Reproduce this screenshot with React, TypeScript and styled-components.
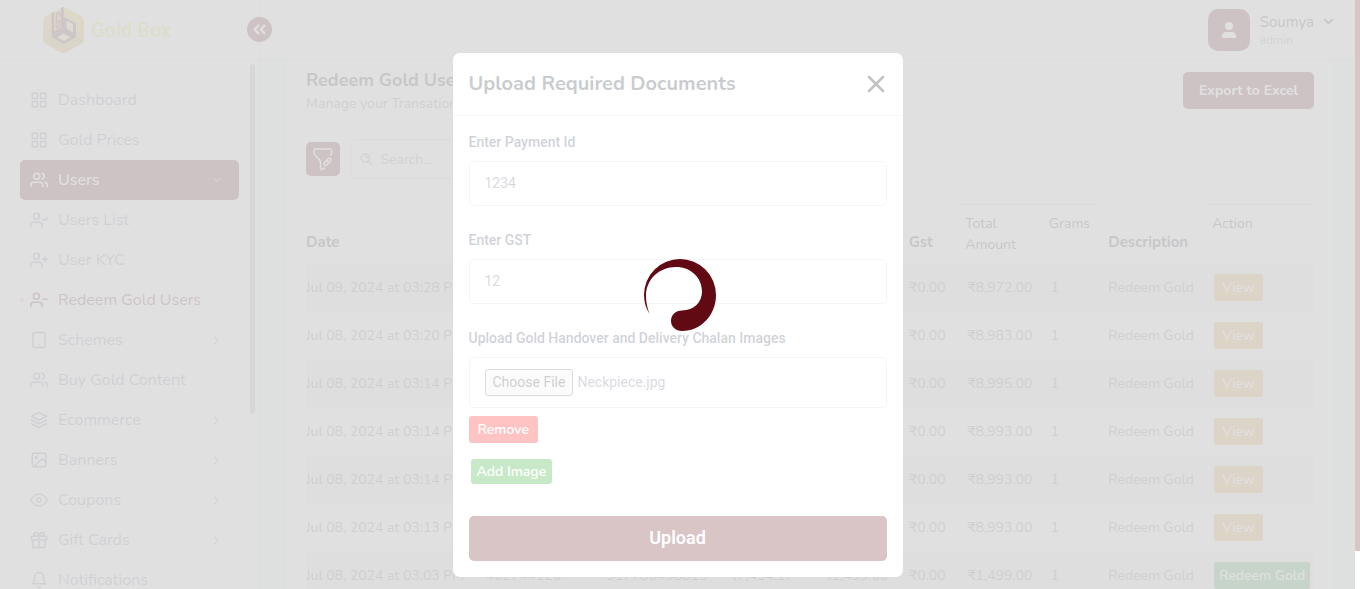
import React from "react";
import styled, { createGlobalStyle, css } from "styled-components";
import {
  FiBell, FiChevronDown, FiChevronRight, FiEye, FiGift, FiGrid, FiImage,
  FiLayers, FiTablet, FiUserCheck, FiUserMinus, FiUserPlus, FiUsers,
} from "react-icons/fi";
import type { IconType } from "react-icons";

const maroon = "#600914";
const nunito = `Nunito, Lato, "Open Sans", sans-serif`;
const roboto = `Roboto, "Liberation Sans", sans-serif`;

const GlobalStyle = createGlobalStyle`
  *, *::before, *::after { box-sizing: border-box; }
  body { margin: 0; background: #fff; font-family: ${nunito}; font-size: 14px; color: #212b36; }
  button, input { font-family: inherit; }
  h1, h2, p, ul { margin: 0; padding: 0; }
`;

const Shell = styled.div`
  height: 100vh;
  display: flex;
  flex-direction: column;
  overflow: hidden;
  padding-right: 5px;
`;

const TopBar = styled.header`
  display: flex;
  flex: none;
  height: 60px;
  border-bottom: 1px solid #d5dcdf;
`;

const BrandArea = styled.div`
  position: relative;
  display: flex;
  align-items: center;
  gap: 6px;
  width: 260px;
  padding-left: 42px;
  border-right: 1px solid #d5dcdf;
`;

const BrandName = styled.span`
  font: 500 20px/24px ${roboto};
  color: #e6e05a;
`;

const CollapseButton = styled.button`
  position: absolute;
  right: -13px;
  top: 17px;
  width: 25px;
  height: 25px;
  padding: 0;
  border: 0;
  border-radius: 50%;
  display: grid;
  place-items: center;
  background: ${maroon};
`;

const Account = styled.div`
  margin-left: auto;
  padding-right: 19px;
  display: flex;
  align-items: center;
  gap: 10px;
`;

const Avatar = styled.span`
  width: 42px;
  height: 42px;
  border-radius: 10px;
  display: grid;
  place-items: center;
  background: ${maroon};
`;

const AccountText = styled.div`
  display: grid;
  grid-template-columns: auto auto;
  column-gap: 7px;
  align-items: center;
  font-size: 15px;
  line-height: 20px;
  svg { color: #212b36; }
`;

const Role = styled.span`
  font-size: 12px;
  line-height: 16px;
  color: #7b8e9c;
`;

const Body = styled.div`
  display: flex;
  flex: 1;
  min-height: 0;
`;

const Sidebar = styled.nav`
  display: flex;
  flex: none;
  width: 260px;
  padding: 4px 4px 0 20px;
  border-right: 1px solid #d5dcdf;
  overflow: hidden;
`;

const Menu = styled.ul`
  flex: 1;
  padding-top: 16px;
  list-style: none;
`;

const SideScroll = styled.div`
  width: 5px;
  height: 350px;
  margin-left: 11px;
  border-radius: 3px;
  background: #b4b4b4;
`;

const MenuLink = styled.a<{ $state?: "open" | "current" }>`
  position: relative;
  display: flex;
  align-items: center;
  gap: 10px;
  height: 40px;
  padding: 0 16px 0 10px;
  border-radius: 5px;
  font-size: 16px;
  color: #737b95;
  text-decoration: none;
  ${(p) => p.$state === "open" && css`background: ${maroon}; color: #fff; font-weight: 500;`}
  ${(p) => p.$state === "current" && css`
    color: ${maroon};
    &::before {
      content: "";
      position: absolute;
      left: 0;
      width: 4px;
      height: 4px;
      border-radius: 50%;
      background: #ffb580;
    }
  `}
`;

const Arrow = styled.span`
  margin-left: auto;
  display: flex;
  opacity: 0.8;
`;

const Main = styled.main`
  flex: 1;
  min-width: 0;
  padding: 0 21px 0 25px;
  background: #ebf7f3;
`;

const Card = styled.section`
  height: 100%;
  padding: 6px 19px 0 20px;
  background: #fff;
  overflow: hidden;
  border: solid #e4eeee;
  border-width: 0 1px;
`;

const CardHead = styled.div`
  display: flex;
  justify-content: space-between;
  align-items: center;
  height: 49px;
`;

const PageTitle = styled.h1`
  font-size: 18px;
  line-height: 26px;
  font-weight: 700;
`;

const Subtitle = styled.p`
  font-size: 14px;
  line-height: 22px;
  color: #637381;
`;

const ExportButton = styled.button`
  height: 37px;
  padding: 0 16px;
  border: 0;
  border-radius: 5px;
  background: ${maroon};
  color: #fff;
  font-size: 14px;
  font-weight: 700;
`;

const Tools = styled.div`
  display: flex;
  align-items: center;
  gap: 10px;
  margin: 24px 0 25px;
`;

const FilterButton = styled.button`
  width: 34px;
  height: 34px;
  padding: 0;
  border: 0;
  border-radius: 5px;
  display: grid;
  place-items: center;
  background: ${maroon};
`;

const SearchBox = styled.label`
  display: flex;
  align-items: center;
  gap: 8px;
  width: 200px;
  height: 40px;
  padding: 0 9px;
  border: 1px solid #d0d4da;
  border-radius: 5px;
`;

const SearchInput = styled.input`
  width: 100%;
  padding: 0;
  border: 0;
  outline: 0;
  background: none;
  font-size: 14px;
  &::placeholder { color: #7e7e7e; }
`;

const Table = styled.table`
  width: 100%;
  table-layout: fixed;
  border-collapse: separate;
  border-spacing: 0;
`;

const Th = styled.th<{ $light?: boolean; $inset?: boolean }>`
  height: 59px;
  padding: 0 0 10px ${(p) => (p.$inset ? 10 : 0)}px;
  text-align: left;
  vertical-align: bottom;
  font-size: 15px;
  line-height: 21px;
  font-weight: 700;
  white-space: nowrap;
  ${(p) => p.$light && css`
    padding: 8px 0 8px 8px;
    border-top: 1px solid #ccd0d3;
    vertical-align: top;
    font-size: 14px;
    font-weight: 400;
    white-space: normal;
  `}
`;

const Row = styled.tr`
  &:nth-child(odd) { background: #eaeaea; }
`;

const Td = styled.td<{ $inset?: boolean }>`
  height: 48px;
  padding: 0 0 0 ${(p) => (p.$inset ? 10 : 0)}px;
  font-size: 14px;
  color: #637381;
  white-space: nowrap;
`;

const RowButton = styled.button<{ $wide?: boolean }>`
  display: block;
  height: 27px;
  padding: 0 ${(p) => (p.$wide ? 5 : 8)}px;
  border: 0;
  border-radius: 3px;
  background: ${(p) => (p.$wide ? "#28963c" : "#d0982a")};
  color: #fff;
  font-size: 14px;
  font-weight: 500;
`;

const Backdrop = styled.div`
  position: fixed;
  inset: 0 5px 0 0;
  display: flex;
  justify-content: center;
  align-items: flex-start;
  padding-top: 53px;
  background: rgba(0, 0, 0, 0.5);
`;

const Dialog = styled.section`
  width: 450px;
  border-radius: 7px;
  background: #fff;
`;

const DialogHead = styled.header`
  display: flex;
  justify-content: space-between;
  align-items: center;
  height: 63px;
  padding: 0 16px;
  border-bottom: 1px solid #dcdfe4;
`;

const DialogTitle = styled.h2`
  font-size: 20px;
  line-height: 26px;
  font-weight: 700;
`;

const CloseButton = styled.button`
  display: flex;
  padding: 2px;
  border: 0;
  background: none;
`;

const Form = styled.form`
  display: flex;
  flex-direction: column;
  align-items: flex-start;
  padding: 16px;
  font-family: ${roboto};
`;

const Field = styled.div`
  width: 100%;
  margin-bottom: 24px;
`;

const Label = styled.label`
  display: block;
  margin-bottom: 8px;
  font-size: 14px;
  line-height: 21px;
  font-weight: 500;
  color: #3a4560;
`;

const TextInput = styled.input`
  display: block;
  width: 100%;
  height: 45px;
  padding: 0 15px 1px;
  border: 1px solid #d4d5dc;
  border-radius: 5px;
  font-size: 14px;
  color: #5b6678;
`;

const FileField = styled(Field)`
  margin-bottom: 8px;
`;

const FileBox = styled.label`
  display: flex;
  align-items: center;
  gap: 4px;
  height: 51px;
  padding: 0 15px;
  border: 1px solid #d4d5dc;
  border-radius: 5px;
  font-size: 14px;
  line-height: 25px;
  color: #5b6678;
`;

const FileInput = styled.input`
  position: absolute;
  width: 1px;
  height: 1px;
  opacity: 0;
`;

const FileButton = styled.span`
  padding: 0 7px;
  border: 1px solid #6b6b6b;
  border-radius: 3px;
  background: #efefef;
  color: #333;
`;

const SmallButton = styled.button<{ $kind: "remove" | "add" }>`
  border: 0;
  border-radius: 3px;
  color: #fff;
  font: 600 14px/25px ${nunito};
  ${(p) => p.$kind === "remove"
    ? css`padding: 1px 9px; background: #ff0808;`
    : css`padding: 0 6px; margin: 16px 2px 32px; background: #15a31a;`}
`;

const UploadButton = styled.button`
  width: 100%;
  height: 45px;
  padding: 0 0 2px;
  border: 0;
  border-radius: 5px;
  background: ${maroon};
  color: #fff;
  font-size: 18px;
  font-weight: 600;
`;

const PageScroll = styled.div`
  position: fixed;
  inset: 0 0 0 auto;
  width: 5px;
  background: #fff;
  &::before {
    content: "";
    display: block;
    height: 93.5%;
    background: ${maroon};
  }
`;

const LoadingVeil = styled.div`
  position: fixed;
  inset: 0;
  display: grid;
  place-items: center;
  background: rgba(255, 255, 255, 0.76);
`;

type Item = { icon: IconType; text: string; arrow?: "down" | "right"; state?: "open" | "current" };

const menu: Item[] = [
  { icon: FiGrid, text: "Dashboard" },
  { icon: FiGrid, text: "Gold Prices" },
  { icon: FiUsers, text: "Users", arrow: "down", state: "open" },
  { icon: FiUserCheck, text: "Users List" },
  { icon: FiUserPlus, text: "User KYC" },
  { icon: FiUserMinus, text: "Redeem Gold Users", state: "current" },
  { icon: FiTablet, text: "Schemes", arrow: "right" },
  { icon: FiUsers, text: "Buy Gold Content" },
  { icon: FiLayers, text: "Ecommerce", arrow: "right" },
  { icon: FiImage, text: "Banners", arrow: "right" },
  { icon: FiEye, text: "Coupons", arrow: "right" },
  { icon: FiGift, text: "Gift Cards", arrow: "right" },
  { icon: FiBell, text: "Notifications" },
];

const rows = [
  { date: "Jul 09, 2024 at 03:28 PM", total: "₹8,972.00" },
  { date: "Jul 08, 2024 at 03:20 PM", total: "₹8,983.00" },
  { date: "Jul 08, 2024 at 03:14 PM", total: "₹8,995.00" },
  { date: "Jul 08, 2024 at 03:14 PM", total: "₹8,993.00" },
  { date: "Jul 08, 2024 at 03:14 PM", total: "₹8,993.00" },
  { date: "Jul 08, 2024 at 03:13 PM", total: "₹8,993.00" },
  { date: "Jul 08, 2024 at 03:03 PM", total: "₹1,499.00", redeem: true },
];

const Logo = () => (
  <svg width="43" height="48" viewBox="0 0 43 48" aria-hidden="true">
    <defs>
      <linearGradient id="gold" x1="0" y1="0" x2="0" y2="1">
        <stop offset="0" stopColor="#ecc440" />
        <stop offset="1" stopColor="#c8963c" />
      </linearGradient>
    </defs>
    <path d="M19 1.6q2.500-1.400 5 0L39 10q3 1.600 3 5v18q0 3.400-3 5L24 46.400q-2.500 1.400-5 0L4 38q-3-1.600-3-5V15q0-3.400 3-5z" fill="url(#gold)" />
    <path fill="#6a2035" fillRule="evenodd" d="M9.700 7l2.500-1v19.500l6.800-4V2l2.700-1v10L34 17v14l-12.300 7L9.700 31z" />
    <path fill="#f0d080" d="M24.500 14.700L31 18v8.500l-6.500-4zM15 31.300l6.700-3.700 6.600 3.700-6.600 3.700z" />
    <path fill="none" stroke="#6a2035" strokeWidth="1.600" d="M17.600 11V7.500q0-1.300-1.500-.700-1.600.700-1.600 2.500v11.500q0 1.700 1.500 1 1.600-.800 1.600-2.500V14.500l-1.600.700" />
  </svg>
);

const FilterIcon = () => (
  <svg width="22" height="24" viewBox="0 0 22 24" fill="none" stroke="#fff" strokeWidth="1.500" strokeLinecap="round" strokeLinejoin="round" aria-hidden="true">
    <path d="M19 8l.500-1.500V3.500Q19.500 2 18 2H3.500Q2 2 2 3.500V6q0 1 1 2l4.500 5q1 1 1 2.500V21q0 2 2 1.200l2-1.200" />
    <path d="M12.500 15.500l4-4q1.300-.800 2.200.200.900 1 0 2.200l-4 4.300q-1.200.800-2.200 0-.900-1.300 0-2.700zM15 15l1.200-1.200" />
  </svg>
);

const SearchIcon = () => (
  <svg width="14" height="14" viewBox="0 0 14 14" fill="none" stroke="#70757c" strokeWidth="1.300" strokeLinecap="round" aria-hidden="true">
    <circle cx="6" cy="6" r="4.700" />
    <path d="M9.500 9.500L13 13M6 3.700q1.800 0 2.300 1.800" />
  </svg>
);

const Swirl = () => (
  <svg width="72" height="72" viewBox="0 0 72 72" role="img" aria-label="Loading">
    <path
      fill="#620a14"
      d="M5.500 55C2 49 0 43 0 36A36 36 0 0 1 72 36C72 56 57 72 38 72C31.500 72 27 67.500 27 62C27 56 31.500 51.500 38 51.500C50 51.500 58 43 58 32.500C58 18.500 46.500 8 32 8C15 8 2 20.500 2 37C2 44 3.500 49.500 5.500 55Z"
    />
  </svg>
);

export default function App() {
  return (
    <>
      <GlobalStyle />
      <Shell>
        <TopBar>
          <BrandArea>
            <Logo />
            <BrandName>Gold Box</BrandName>
            <CollapseButton aria-label="Collapse sidebar">
              <svg width="13" height="11" viewBox="0 0 13 11" fill="none" stroke="#fff" strokeWidth="2.400" aria-hidden="true">
                <path d="M6 1L1.800 5.500 6 10M12 1L7.800 5.500 12 10" />
              </svg>
            </CollapseButton>
          </BrandArea>
          <Account>
            <Avatar>
              <svg width="14" height="16" viewBox="0 0 14 16" fill="#fff" aria-hidden="true">
                <circle cx="7" cy="4" r="4" />
                <path d="M0 16v-1q0-5 5-5h4q5 0 5 5v1z" />
              </svg>
            </Avatar>
            <AccountText>
              <span>Soumya</span>
              <FiChevronDown size={15} strokeWidth={3} />
              <Role>admin</Role>
            </AccountText>
          </Account>
        </TopBar>
        <Body>
          <Sidebar aria-label="Main menu">
            <Menu>
              {menu.map(({ icon: Icon, text, arrow, state }) => (
                <li key={text}>
                  <MenuLink href="#" $state={state}>
                    <Icon size={18} />
                    {text}
                    {arrow && (
                      <Arrow>
                        {arrow === "down" ? <FiChevronDown size={12} /> : <FiChevronRight size={13} />}
                      </Arrow>
                    )}
                  </MenuLink>
                </li>
              ))}
            </Menu>
            <SideScroll />
          </Sidebar>
          <Main>
            <Card>
              <CardHead>
                <div>
                  <PageTitle>Redeem Gold Users</PageTitle>
                  <Subtitle>Manage your Transations</Subtitle>
                </div>
                <ExportButton>Export to Excel</ExportButton>
              </CardHead>
              <Tools>
                <FilterButton aria-label="Filter"><FilterIcon /></FilterButton>
                <SearchBox>
                  <SearchIcon />
                  <SearchInput type="search" placeholder="Search..." aria-label="Search" />
                </SearchBox>
              </Tools>
              <Table>
                <colgroup>
                  <col />
                  <col style={{ width: "12%" }} />
                  <col style={{ width: "12.1%" }} />
                  <col style={{ width: "9.4%" }} />
                  <col style={{ width: "8.5%" }} />
                  <col style={{ width: "4.8%" }} />
                  <col style={{ width: "8.3%" }} />
                  <col style={{ width: "5.7%" }} />
                  <col style={{ width: "10.5%" }} />
                  <col style={{ width: "10.9%" }} />
                </colgroup>
                <thead>
                  <tr>
                    <Th>Date</Th>
                    <Th>Payment Id</Th>
                    <Th>Mobile</Th>
                    <Th>Price</Th>
                    <Th>Amount</Th>
                    <Th>Gst</Th>
                    <Th $light>Total Amount</Th>
                    <Th $light>Grams</Th>
                    <Th $inset>Description</Th>
                    <Th $light>Action</Th>
                  </tr>
                </thead>
                <tbody>
                  {rows.map((r, i) => (
                    <Row key={i}>
                      <Td>{r.date}</Td>
                      <Td>462744126</Td>
                      <Td>917780498015</Td>
                      <Td>₹7,454.17</Td>
                      <Td>₹1,499.00</Td>
                      <Td>₹0.00</Td>
                      <Td $inset>{r.total}</Td>
                      <Td $inset>1</Td>
                      <Td $inset>Redeem Gold</Td>
                      <Td $inset>
                        <RowButton $wide={r.redeem}>{r.redeem ? "Redeem Gold" : "View"}</RowButton>
                      </Td>
                    </Row>
                  ))}
                </tbody>
              </Table>
            </Card>
          </Main>
        </Body>
      </Shell>
      <Backdrop>
        <Dialog role="dialog" aria-labelledby="upload-title">
          <DialogHead>
            <DialogTitle id="upload-title">Upload Required Documents</DialogTitle>
            <CloseButton aria-label="Close">
              <svg width="18" height="18" viewBox="0 0 18 18" stroke="#000" strokeWidth="2.500" strokeLinecap="round" aria-hidden="true">
                <path d="M2 2l14 14M16 2L2 16" />
              </svg>
            </CloseButton>
          </DialogHead>
          <Form onSubmit={(e) => e.preventDefault()}>
            <Field>
              <Label htmlFor="payment">Enter Payment Id</Label>
              <TextInput id="payment" defaultValue="1234" />
            </Field>
            <Field>
              <Label htmlFor="gst">Enter GST</Label>
              <TextInput id="gst" defaultValue="12" />
            </Field>
            <FileField>
              <Label htmlFor="images">Upload Gold Handover and Delivery Chalan Images</Label>
              <FileBox>
                <FileInput id="images" type="file" />
                <FileButton>Choose File</FileButton>
                Neckpiece.jpg
              </FileBox>
            </FileField>
            <SmallButton type="button" $kind="remove">Remove</SmallButton>
            <SmallButton type="button" $kind="add">Add Image</SmallButton>
            <UploadButton>Upload</UploadButton>
          </Form>
        </Dialog>
      </Backdrop>
      <PageScroll />
      <LoadingVeil>
        <Swirl />
      </LoadingVeil>
    </>
  );
}
